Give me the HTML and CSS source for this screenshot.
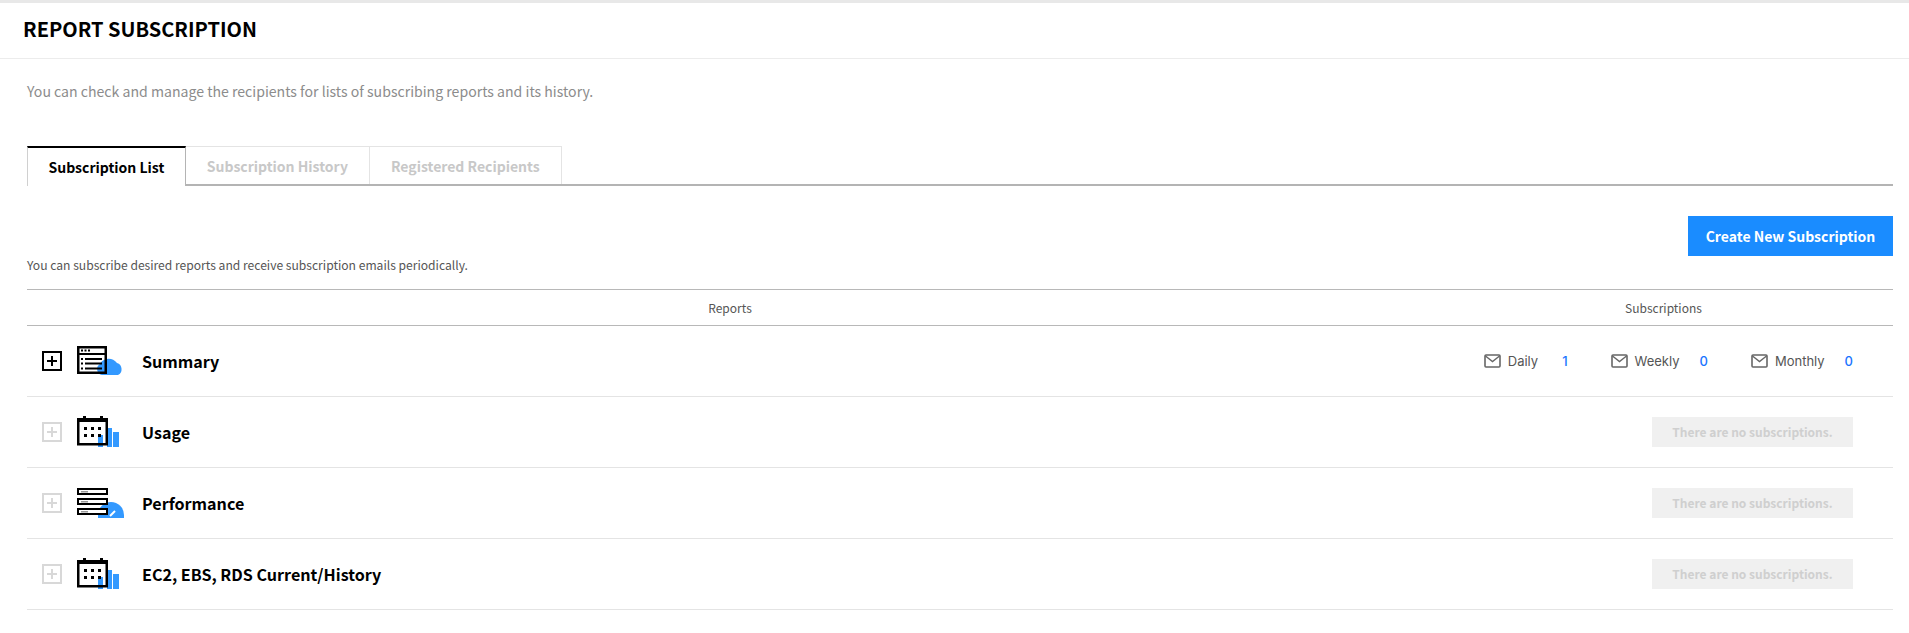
FILE: index.html
```html
<!DOCTYPE html>
<html lang="en">
<head>
  <meta charset="UTF-8" />
  <title>Report Subscription</title>
  <link rel="stylesheet" href="styles.css">
</head>
<body>
  <svg class="icon-defs" width="0" height="0">
    <defs>
      <symbol id="ico-mail" viewBox="0 0 17 14">
        <rect x="1" y="1" width="15" height="12" rx="1" fill="none" stroke="currentColor" stroke-width="1.6"/>
        <path d="M1.5 2 L8.5 7.5 L15.5 2" fill="none" stroke="currentColor" stroke-width="1.4"/>
      </symbol>
      <symbol id="ico-calendar" viewBox="0 0 48 36">
        <rect x="21" y="21" width="5" height="12" fill="#3399ff"/>
        <rect x="30" y="14" width="5" height="19" fill="#3399ff"/>
        <rect x="36" y="18" width="6" height="15" fill="#3399ff"/>
        <rect x="1.25" y="5.25" width="28.5" height="25" fill="none" stroke="#000" stroke-width="2.5"/>
        <rect x="0" y="4" width="31" height="4" fill="#000"/>
        <rect x="6" y="2" width="3" height="4" fill="#000"/>
        <rect x="23" y="2" width="3" height="4" fill="#000"/>
        <g fill="#000">
          <rect x="7" y="13" width="3" height="3"/><rect x="14" y="13" width="3" height="3"/><rect x="21" y="13" width="3" height="3"/>
          <rect x="7" y="20" width="3" height="3"/><rect x="14" y="20" width="3" height="3"/><rect x="21" y="20" width="3" height="3"/>
        </g>
      </symbol>
    </defs>
  </svg>

  <div class="page-header">
    <h1 class="page-title">REPORT SUBSCRIPTION</h1>
  </div>

  <div class="content">
    <p class="page-desc">You can check and manage the recipients for lists of subscribing reports and its history.</p>

    <div class="tabs">
      <div class="tab active">Subscription List</div>
      <div class="tab">Subscription History</div>
      <div class="tab">Registered Recipients</div>
    </div>

    <div class="toolbar">
      <span class="toolbar-text">You can subscribe desired reports and receive subscription emails periodically.</span>
      <button class="create-btn">Create New Subscription</button>
    </div>

    <div class="table-head">
      <div class="col-reports">Reports</div>
      <div class="col-subs">Subscriptions</div>
    </div>

    <div class="report-row">
      <div class="expander on"></div>
      <svg class="report-icon" viewBox="0 0 48 36">
        <path d="M25 32 a6 6 0 0 1 -2 -11 a10 10 0 0 1 17 -1 a6.5 6.5 0 0 1 1 12 z" fill="#3399ff"/>
        <rect x="1.25" y="4.25" width="27.5" height="25.5" fill="none" stroke="#000" stroke-width="2.5"/>
        <rect x="1" y="10" width="28" height="2" fill="#000"/>
        <g fill="#000">
          <rect x="4" y="6.5" width="2" height="2"/><rect x="7.5" y="6.5" width="2" height="2"/><rect x="11" y="6.5" width="2" height="2"/>
          <rect x="4" y="15" width="2" height="2"/><rect x="8" y="15" width="17" height="2"/>
          <rect x="4" y="19.5" width="2" height="2"/><rect x="8" y="19.5" width="17" height="2"/>
          <rect x="4" y="24.5" width="2" height="2"/><rect x="8" y="24.5" width="17" height="2"/>
        </g>
      </svg>
      <div class="report-name">Summary</div>
      <div class="sub-counts">
        <div class="sub-item">
          <svg class="mail-icon"><use href="#ico-mail"/></svg>
          <span class="sub-label">Daily</span>
          <span class="sub-num sub-num-daily">1</span>
        </div>
        <div class="sub-item">
          <svg class="mail-icon"><use href="#ico-mail"/></svg>
          <span class="sub-label">Weekly</span>
          <span class="sub-num">0</span>
        </div>
        <div class="sub-item">
          <svg class="mail-icon"><use href="#ico-mail"/></svg>
          <span class="sub-label">Monthly</span>
          <span class="sub-num">0</span>
        </div>
      </div>
    </div>

    <div class="report-row">
      <div class="expander"></div>
      <svg class="report-icon"><use href="#ico-calendar"/></svg>
      <div class="report-name">Usage</div>
      <div class="no-subs">There are no subscriptions.</div>
    </div>

    <div class="report-row">
      <div class="expander"></div>
      <svg class="report-icon" viewBox="0 0 48 36">
        <path d="M21 33 v-3 a13 13 0 0 1 26 0 v3 z" fill="#3399ff"/>
        <g fill="#fff" stroke="#000" stroke-width="2">
          <rect x="1" y="4" width="29" height="5"/>
          <rect x="1" y="14" width="29" height="5"/>
          <rect x="1" y="24" width="29" height="5"/>
        </g>
        <g fill="#999">
          <rect x="4" y="6" width="7" height="1.5"/><rect x="4" y="16" width="7" height="1.5"/><rect x="4" y="26" width="7" height="1.5"/>
        </g>
        <path d="M33 31 L38 26" stroke="#fff" stroke-width="2"/>
      </svg>
      <div class="report-name">Performance</div>
      <div class="no-subs">There are no subscriptions.</div>
    </div>

    <div class="report-row">
      <div class="expander"></div>
      <svg class="report-icon"><use href="#ico-calendar"/></svg>
      <div class="report-name">EC2, EBS, RDS Current/History</div>
      <div class="no-subs">There are no subscriptions.</div>
    </div>
  </div>
</body>
</html>
```

FILE: styles.css
```css
* { margin: 0; padding: 0; box-sizing: border-box; }
body {
  font-family: "Noto Sans CJK KR", "Noto Sans", sans-serif;
  background: #fff;
  color: #000;
  border-top: 3px solid #e8e8e8;
}
.icon-defs { display: block; height: 0; }
.page-header {
  height: 56px;
  padding: 0 23px 4px;
  display: flex;
  align-items: center;
  border-bottom: 1px solid #ececec;
}
.page-title { font-size: 20px; font-weight: 700; color: #000; }
.content { padding: 0 16px 0 27px; }
.page-desc {
  margin-top: 20px;
  height: 24px;
  line-height: 24px;
  font-size: 14.1px;
  color: #8c8c8c;
}
.tabs {
  display: flex;
  margin-top: 43px;
  height: 40px;
  border-bottom: 2px solid #b4b4b4;
}
.tab {
  height: 38px;
  line-height: 39px;
  border: 1px solid #e4e4e4;
  border-bottom: none;
  border-left: none;
  padding: 0 21px;
  font-size: 14px;
  font-weight: 700;
  color: #c8c8c8;
}
.tab.active {
  height: 40px;
  padding: 0 20.5px;
  border-top: 2px solid #000;
  border-left: 1px solid #d0d0d0;
  border-right: 1px solid #b4b4b4;
  background: #fff;
  color: #000;
  line-height: 39px;
}
.toolbar {
  display: flex;
  justify-content: space-between;
  align-items: flex-end;
  margin-top: 30px;
  height: 59px;
}
.toolbar-text { font-size: 12.1px; color: #555; line-height: 20px; }
.create-btn {
  align-self: flex-start;
  width: 205px;
  height: 40px;
  border: none;
  background: #1a8cff;
  color: #fff;
  font-family: inherit;
  font-size: 14px;
  font-weight: 700;
}
.table-head {
  display: flex;
  margin-top: 14px;
  height: 37px;
  border-top: 1px solid #b8b8b8;
  border-bottom: 1px solid #b8b8b8;
  font-size: 12px;
  color: #555;
  line-height: 35px;
  text-align: center;
}
.col-reports { width: 1406px; flex: none; }
.col-subs { width: 461px; flex: none; }
.report-row {
  display: flex;
  align-items: center;
  height: 71px;
  border-bottom: 1px solid #e4e4e4;
  padding-left: 15px;
}
.expander {
  position: relative;
  width: 20px;
  height: 20px;
  border: 2px solid #d8d8d8;
  flex: none;
}
.expander::before, .expander::after {
  content: "";
  position: absolute;
  background: #d8d8d8;
}
.expander::before { left: 3px; right: 3px; top: 7px; height: 2px; }
.expander::after { top: 3px; bottom: 3px; left: 7px; width: 2px; }
.expander.on { border-color: #000; }
.expander.on::before, .expander.on::after { background: #000; }
.report-icon { width: 48px; height: 36px; flex: none; margin-left: 15px; }
.report-name { margin-left: 17px; font-size: 16.1px; font-weight: 700; color: #000; }
.sub-counts {
  margin-left: auto;
  display: flex;
  padding-right: 40px;
}
.sub-item { display: flex; align-items: center; margin-left: 43px; }
.mail-icon { width: 17px; height: 14px; color: #666; }
.sub-label { font-family: Inter, sans-serif; font-size: 13px; color: #555; margin-left: 7px; }
.sub-num { font-family: Inter, sans-serif; font-size: 13px; font-weight: 500; color: #1a75ff; margin-left: 20px; }
.sub-num-daily { margin-left: 24px; }
.no-subs {
  margin-left: auto;
  margin-right: 40px;
  width: 201px;
  height: 30px;
  line-height: 30px;
  background: #f0f0f0;
  color: #cfcfcf;
  font-size: 12px;
  font-weight: 700;
  text-align: center;
}
```
